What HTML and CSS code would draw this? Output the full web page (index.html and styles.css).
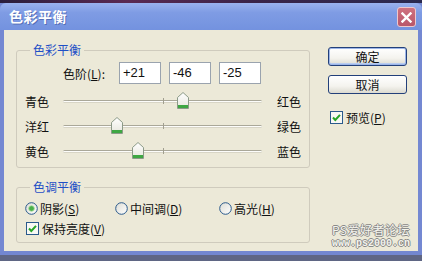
FILE: index.html
```html
<!DOCTYPE html>
<html lang="zh">
<head>
<meta charset="utf-8">
<title>色彩平衡</title>
<link rel="stylesheet" href="styles.css">
</head>
<body>
<div class="strip"></div>
<div class="window">
  <div class="titlebar">
    <span class="title">色彩平衡</span>
    <span class="close"><svg width="11" height="11" viewBox="0 0 11 11"><path d="M1.5 1.5 L9.5 9.5 M9.5 1.5 L1.5 9.5" stroke="#fff" stroke-width="2.4" stroke-linecap="square"/></svg></span>
  </div>
  <div class="body">
    <div class="left">
      <fieldset class="group g1">
        <legend>色彩平衡</legend>
        <div class="levels">
          <span class="lv-label">色阶(<u>L</u>):</span>
          <span class="num">+21</span>
          <span class="num">-46</span>
          <span class="num">-25</span>
        </div>
        <div class="sliders">
          <span class="sl-l">青色</span>
          <div class="track"><i class="tick"></i><span class="thumb" style="left:60.5%"><svg width="12" height="17" viewBox="0 0 12 17"><defs><linearGradient id="tg" x1="0" y1="0" x2="0" y2="1"><stop offset="0" stop-color="#ffffff"/><stop offset="1" stop-color="#e6e6dc"/></linearGradient></defs><path d="M6 0.5 L11.5 5.5 V16.5 H0.5 V5.5 Z" fill="url(#tg)" stroke="#8c9a88"/><rect x="1" y="13" width="10" height="3" fill="#3ea743"/></svg></span></div>
          <span class="sl-r">红色</span>

          <span class="sl-l">洋红</span>
          <div class="track"><i class="tick"></i><span class="thumb" style="left:27%"><svg width="12" height="17" viewBox="0 0 12 17"><path d="M6 0.5 L11.5 5.5 V16.5 H0.5 V5.5 Z" fill="url(#tg)" stroke="#8c9a88"/><rect x="1" y="13" width="10" height="3" fill="#3ea743"/></svg></span></div>
          <span class="sl-r">绿色</span>

          <span class="sl-l">黄色</span>
          <div class="track"><i class="tick"></i><span class="thumb" style="left:37.5%"><svg width="12" height="17" viewBox="0 0 12 17"><path d="M6 0.5 L11.5 5.5 V16.5 H0.5 V5.5 Z" fill="url(#tg)" stroke="#8c9a88"/><rect x="1" y="13" width="10" height="3" fill="#3ea743"/></svg></span></div>
          <span class="sl-r">蓝色</span>
        </div>
      </fieldset>
      <fieldset class="group g2">
        <legend>色调平衡</legend>
        <div class="radios">
          <span class="opt o1"><svg class="rd" width="13" height="13" viewBox="0 0 13 13"><defs><linearGradient id="rg" x1="0" y1="0" x2="1" y2="1"><stop offset="0" stop-color="#dcdcd4"/><stop offset="1" stop-color="#ffffff"/></linearGradient></defs><circle cx="6.5" cy="6.5" r="5.8" fill="url(#rg)" stroke="#2a5a8c"/><circle cx="6.5" cy="6.5" r="2.8" fill="#49b04a" stroke="#a8dca0" stroke-width="0.8"/></svg>阴影(<u>S</u>)</span>
          <span class="opt o2"><svg class="rd" width="13" height="13" viewBox="0 0 13 13"><circle cx="6.5" cy="6.5" r="5.8" fill="url(#rg)" stroke="#2a5a8c"/></svg>中间调(<u>D</u>)</span>
          <span class="opt"><svg class="rd" width="13" height="13" viewBox="0 0 13 13"><circle cx="6.5" cy="6.5" r="5.8" fill="url(#rg)" stroke="#2a5a8c"/></svg>高光(<u>H</u>)</span>
        </div>
        <div class="chk-row"><svg class="cb" width="13" height="13" viewBox="0 0 13 13"><rect x="0.5" y="0.5" width="12" height="12" fill="#f8f8f4" stroke="#2a5a8c"/><path d="M3 6.5 L5.3 9 L10 3.8" fill="none" stroke="#26a526" stroke-width="2"/></svg>保持亮度(<u>V</u>)</div>
      </fieldset>
    </div>
    <div class="right">
      <span class="btn default">确定</span>
      <span class="btn">取消</span>
      <div class="preview"><svg class="cb" width="13" height="13" viewBox="0 0 13 13"><rect x="0.5" y="0.5" width="12" height="12" fill="#f8f8f4" stroke="#2a5a8c"/><path d="M3 6.5 L5.3 9 L10 3.8" fill="none" stroke="#26a526" stroke-width="2"/></svg>预览(<u>P</u>)</div>
    </div>
  </div>
  <div class="watermark">
    <span class="wm1">PS爱好者论坛</span>
    <span class="wm2">www.ps2000.cn</span>
  </div>
</div>
</body>
</html>
```
FILE: styles.css
```css
html, body {
  margin: 0;
  padding: 0;
}
body {
  width: 422px;
  height: 261px;
  overflow: hidden;
  background: #5f6684;
  font-family: "Noto Sans CJK SC", "DejaVu Sans", sans-serif;
  font-size: 12px;
  color: #111;
}
u { text-decoration: underline; }

.strip {
  height: 3px;
  background: linear-gradient(90deg, #2a1e3c, #5a2a52 30%, #3a2448 60%, #2a2a50);
}

.window {
  position: relative;
  background: #7488d2;
  border-bottom: 4px solid #7387d0;
  display: flex;
  flex-direction: column;
}

.titlebar {
  height: 27px;
  display: flex;
  align-items: flex-start;
  justify-content: space-between;
  background: linear-gradient(180deg, #9ab2ee 0%, #7f9ce4 35%, #7392df 100%);
  border-radius: 6px 6px 0 0;
}
.title {
  margin: 5px 0 0 9px;
  color: #fff;
  font-size: 14px;
  font-weight: bold;
  line-height: 17px;
  letter-spacing: 0.5px;
  text-shadow: 1px 1px 0 rgba(40, 60, 130, 0.45);
}
.close {
  margin: 4px 6px 0 0;
  width: 19px;
  height: 20px;
  box-sizing: border-box;
  border: 1px solid #eec8cc;
  border-radius: 3px;
  background: linear-gradient(180deg, #cf7280, #b9566a);
  display: flex;
  align-items: center;
  justify-content: center;
}

.body {
  margin: 0 4px;
  height: 221px;
  box-sizing: border-box;
  background: #ece9d8;
  display: flex;
  padding: 13px 0 0 12px;
}

.left {
  width: 294px;
  display: flex;
  flex-direction: column;
}

.group {
  margin: 0;
  padding: 0 0 3px 0;
  border: 1px solid #cfcbbd;
  border-radius: 3px;
  min-width: 0;
}
.group legend {
  margin-left: 13px;
  padding: 0 3px;
  color: #1f4fc6;
  line-height: 14px;
}

.levels {
  display: flex;
  align-items: center;
  margin-top: 5px;
  padding-left: 46px;
  height: 22px;
}
.lv-label {
  width: 56px;
}
.num {
  width: 42px;
  height: 22px;
  box-sizing: border-box;
  border: 1px solid #9aa3ae;
  background: #fff;
  margin-right: 8px;
  padding-left: 3px;
  font-family: "Liberation Sans", sans-serif;
  font-size: 13px;
  line-height: 20px;
}

.sliders {
  display: grid;
  grid-template-columns: 38px 199px auto;
  grid-auto-rows: 25px;
  align-items: center;
  margin-top: 5px;
  padding-left: 8px;
}
.sl-r {
  margin-left: 15px;
}
.track {
  position: relative;
  height: 3px;
  box-sizing: border-box;
  background: #fdfdfb;
  border-top: 1px solid #aaa899;
  border-bottom: 1px solid #d8d5c6;
  border-radius: 2px;
}
.tick {
  position: absolute;
  left: 50%;
  top: -3px;
  width: 1px;
  height: 6px;
  background: #a19f90;
}
.thumb {
  position: absolute;
  top: -9px;
  margin-left: -6px;
  width: 12px;
  height: 17px;
  display: block;
}
.thumb svg { display: block; }

.g2 {
  margin-top: 12px;
  padding-bottom: 7px;
}
.radios {
  display: flex;
  align-items: center;
  margin-top: 8px;
  padding-left: 8px;
  height: 13px;
}
.opt {
  display: flex;
  align-items: center;
}
.o1 { width: 90px; }
.o2 { width: 104px; }
.rd { margin-right: 2px; flex: none; }

.chk-row {
  display: flex;
  align-items: center;
  margin-top: 7px;
  padding-left: 9px;
  height: 13px;
}
.cb { margin-right: 3px; flex: none; }

.right {
  margin-left: 18px;
  display: flex;
  flex-direction: column;
  align-items: flex-start;
}
.btn {
  width: 79px;
  height: 19px;
  box-sizing: border-box;
  border: 1px solid #23407a;
  border-radius: 3px;
  background: linear-gradient(180deg, #ffffff 0%, #f4f3ee 60%, #dcdad0 100%);
  display: flex;
  align-items: center;
  justify-content: center;
  margin-top: 9px;
  line-height: 14px;
}
.btn.default {
  margin-top: 4px;
  box-shadow: inset 0 0 0 1px #9db6e8, inset 0 -1px 0 1px #b8ccf0;
}
.preview {
  display: flex;
  align-items: center;
  margin: 17px 0 0 2px;
  height: 13px;
}

.watermark {
  position: absolute;
  right: 12px;
  bottom: 3px;
  display: flex;
  flex-direction: column;
  align-items: flex-end;
  gap: 3px;
  color: #f4f4ee;
  text-shadow: 1px 0 0 #8a8a88, -1px 0 0 #8a8a88, 0 1px 0 #8a8a88, 0 -1px 0 #8a8a88;
}
.wm1 {
  display: block;
  font-size: 12px;
  line-height: 13px;
  letter-spacing: 0.5px;
}
.wm2 {
  display: block;
  font-family: "Liberation Mono", monospace;
  font-size: 10px;
  font-weight: bold;
  line-height: 9px;
}
```
